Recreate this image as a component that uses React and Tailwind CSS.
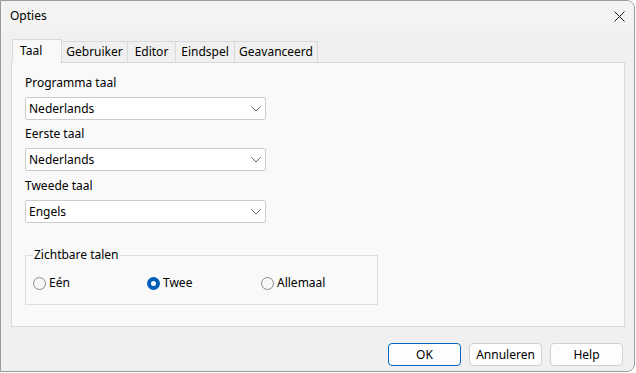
import React from 'react';

function Combo({ value }) {
  return (
    <div className="flex items-center justify-between w-[241px] h-[23px] border border-[#cccccc] rounded-[2px] bg-white pl-[3px] pr-[4px]">
      <span>{value}</span>
      <svg width="10" height="6" viewBox="0 0 10 6">
        <path d="M0.5 0.5 L5 5 L9.5 0.5" fill="none" stroke="#5f5f5f" strokeWidth="1" />
      </svg>
    </div>
  );
}

function Radio({ label, checked }) {
  return (
    <div className="flex items-center w-[114px]">
      {checked ? (
        <span className="flex items-center justify-center w-[13px] h-[13px] rounded-full bg-[#005fb8]">
          <span className="w-[5px] h-[5px] rounded-full bg-white" />
        </span>
      ) : (
        <span className="w-[13px] h-[13px] rounded-full border border-[#8b8b8b] bg-[#f7f7f7]" />
      )}
      <span className="ml-[3px]">{label}</span>
    </div>
  );
}

function Button({ children, primary }) {
  return (
    <button
      className={
        primary
          ? 'w-[73px] h-[23px] rounded-[4px] border border-[#0067c0] bg-[#fdfdfd] leading-none'
          : 'w-[73px] h-[23px] rounded-[4px] border border-[#d0d0d0] bg-[#fdfdfd] leading-none'
      }
    >
      {children}
    </button>
  );
}

export default function App() {
  // tab widths taken from the dialog
  const tabs = [
    { label: 'Gebruiker', cls: 'w-[66px]' },
    { label: 'Editor', cls: 'w-[48px]' },
    { label: 'Eindspel', cls: 'w-[59px]' },
    { label: 'Geavanceerd', cls: 'w-[83px]' },
  ];

  return (
    <div className="w-[636px] h-[373px] bg-white font-['Noto_Sans',sans-serif] text-[12px] leading-[16px] text-black">
      <div className="w-[635px] h-[372px] flex flex-col border border-[#9a9a9a] rounded-tr-[8px] rounded-br-[8px] overflow-hidden bg-[#f0f0f0]">
        {/* title bar */}
        <div className="flex items-center justify-between h-[30px] bg-[#f3f3f3] pl-[9px] pr-[9px]">
          <span>Opties</span>
          <svg width="11" height="11" viewBox="0 0 11 11">
            <path d="M0.5 0.5 L10.5 10.5 M10.5 0.5 L0.5 10.5" stroke="#1a1a1a" strokeWidth="1" />
          </svg>
        </div>

        {/* body */}
        <div className="flex flex-col pt-[8px] pl-[10px]">
          <div className="flex items-end h-[23px]">
            <div className="relative z-10 -mb-px flex items-center h-[24px] w-[50px] ml-[1px] pl-[7px] border border-b-0 border-[#d9d9d9] bg-[#f9f9f9]">
              <span className="-mt-[2px]">Taal</span>
            </div>
            {tabs.map((t) => (
              <div
                key={t.label}
                className={`${t.cls} flex items-center justify-center h-[21px] border-t border-r border-[#d9d9d9] bg-[#f0f0f0]`}
              >
                {t.label}
              </div>
            ))}
          </div>

          <div className="w-[614px] h-[265px] border border-[#d9d9d9] bg-[#f9f9f9] pt-[12px] pl-[13px]">
            <div>Programma taal</div>
            <div className="mt-[6px]">
              <Combo value="Nederlands" />
            </div>
            <div className="mt-[6px]">Eerste taal</div>
            <div className="mt-[6px]">
              <Combo value="Nederlands" />
            </div>
            <div className="mt-[7px]">Tweede taal</div>
            <div className="mt-[6px]">
              <Combo value="Engels" />
            </div>

            <fieldset className="mt-[24px] w-[353px] h-[58px] border border-[#dcdcdc] pl-[7px] pt-[12px]">
              <legend className="px-[1px]">Zichtbare talen</legend>
              <div className="flex items-center">
                <Radio label="Eén" />
                <Radio label="Twee" checked />
                <Radio label="Allemaal" />
              </div>
            </fieldset>
          </div>

          <div className="flex justify-end gap-[8px] mt-[16px] pr-[11px]">
            <Button primary>OK</Button>
            <Button>Annuleren</Button>
            <Button>Help</Button>
          </div>
        </div>
      </div>
    </div>
  );
}
